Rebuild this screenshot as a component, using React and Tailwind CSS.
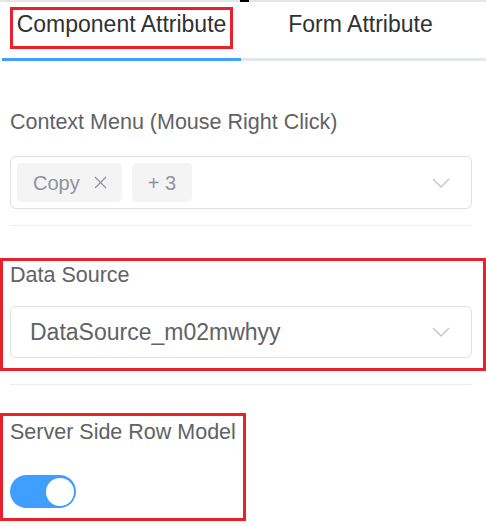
import React from 'react';

function Chevron() {
  return (
    <svg width="18" height="10" viewBox="0 0 18 10" fill="none" className="shrink-0">
      <polyline points="1,1 9,9 17,1" stroke="#c0c4cc" strokeWidth="1.3" strokeLinejoin="round" />
    </svg>
  );
}

function CloseIcon() {
  return (
    <svg width="13" height="13" viewBox="0 0 13 13" fill="none">
      <path d="M1 1 L12 12 M12 1 L1 12" stroke="#909399" strokeWidth="1.2" />
    </svg>
  );
}

function Label({ children }) {
  return <div className="text-[21.5px] leading-[24px] text-[#606266] whitespace-nowrap">{children}</div>;
}

export default function App() {
  return (
    <div className="w-[486px] h-[526px] bg-white overflow-hidden" style={{ fontFamily: '"Liberation Sans", Arial, sans-serif' }}>
      {/* top strip */}
      <div className="flex h-[2px] bg-[#e6e6e6]">
        <div className="ml-[240px] w-[9px] h-full bg-black" />
      </div>

      {/* Tabs */}
      <div className="flex ml-[2px]">
        <div className="w-[239px] h-[59px] flex justify-center items-start pt-[5px] border-b-[3px] border-[#409eff]">
          <span className="border-[3px] border-[#e8212b] px-[4px] pt-[1px] pb-[9px] text-[23px] leading-[26px] text-[#303133] whitespace-nowrap">
            Component Attribute
          </span>
        </div>
        <div className="w-[239px] h-[59px] flex justify-center items-start pt-[5px] border-b-[3px] border-[#e4e7ed]">
          <span className="border-[3px] border-transparent px-[4px] pt-[1px] pb-[9px] text-[23px] leading-[26px] text-[#303133] whitespace-nowrap">
            Form Attribute
          </span>
        </div>
        <div className="flex-1 h-[59px] border-b-[3px] border-[#e4e7ed]" />
      </div>

      <div className="pl-[10px] pr-[14px]">
        {/* Context Menu */}
        <div className="mt-[49px]">
          <Label>Context Menu (Mouse Right Click)</Label>
          <div className="mt-[22px] h-[53px] border border-[#dcdfe6] rounded-[6px] flex items-center pl-[6px] pr-[21px]">
            <div className="h-[39px] flex items-center pl-[16px] pr-[15px] gap-[14px] bg-[#f4f4f5] rounded-[5px] text-[20px] text-[#909399]">
              <span>Copy</span>
              <CloseIcon />
            </div>
            <div className="ml-[10px] h-[39px] flex items-center px-[16px] bg-[#f4f4f5] rounded-[5px] text-[20px] text-[#909399]">
              + 3
            </div>
            <div className="ml-auto flex items-center">
              <Chevron />
            </div>
          </div>
        </div>

        <div className="mt-[16px] h-px bg-[#ebeef5]" />

        {/* Data Source */}
        <div className="mt-[32px] -ml-[10px] -mr-[14px] border-[3px] border-[#e8212b] pl-[7px] pr-[11px] pt-[2px] pb-[10px]">
          <Label>Data Source</Label>
          <div className="mt-[19px] h-[52px] border border-[#dcdfe6] rounded-[6px] flex items-center pl-[19px] pr-[21px]">
            <span className="text-[23px] text-[#606266]">DataSource_m02mwhyy</span>
            <div className="ml-auto flex items-center">
              <Chevron />
            </div>
          </div>
        </div>

        <div className="mt-[13px] h-px bg-[#ebeef5]" />

        {/* Server Side Row Model */}
        <div className="mt-[28px] -ml-[10px] w-[246px] border-[3px] border-[#e8212b] pl-[7px] pt-[4px] pb-[10px]">
          <Label>Server Side Row Model</Label>
          <div className="mt-[31px] w-[66px] h-[33px] rounded-full bg-[#409eff] flex items-center justify-end pr-[2px]">
            <div className="w-[28px] h-[28px] rounded-full bg-white" />
          </div>
        </div>
      </div>
    </div>
  );
}
